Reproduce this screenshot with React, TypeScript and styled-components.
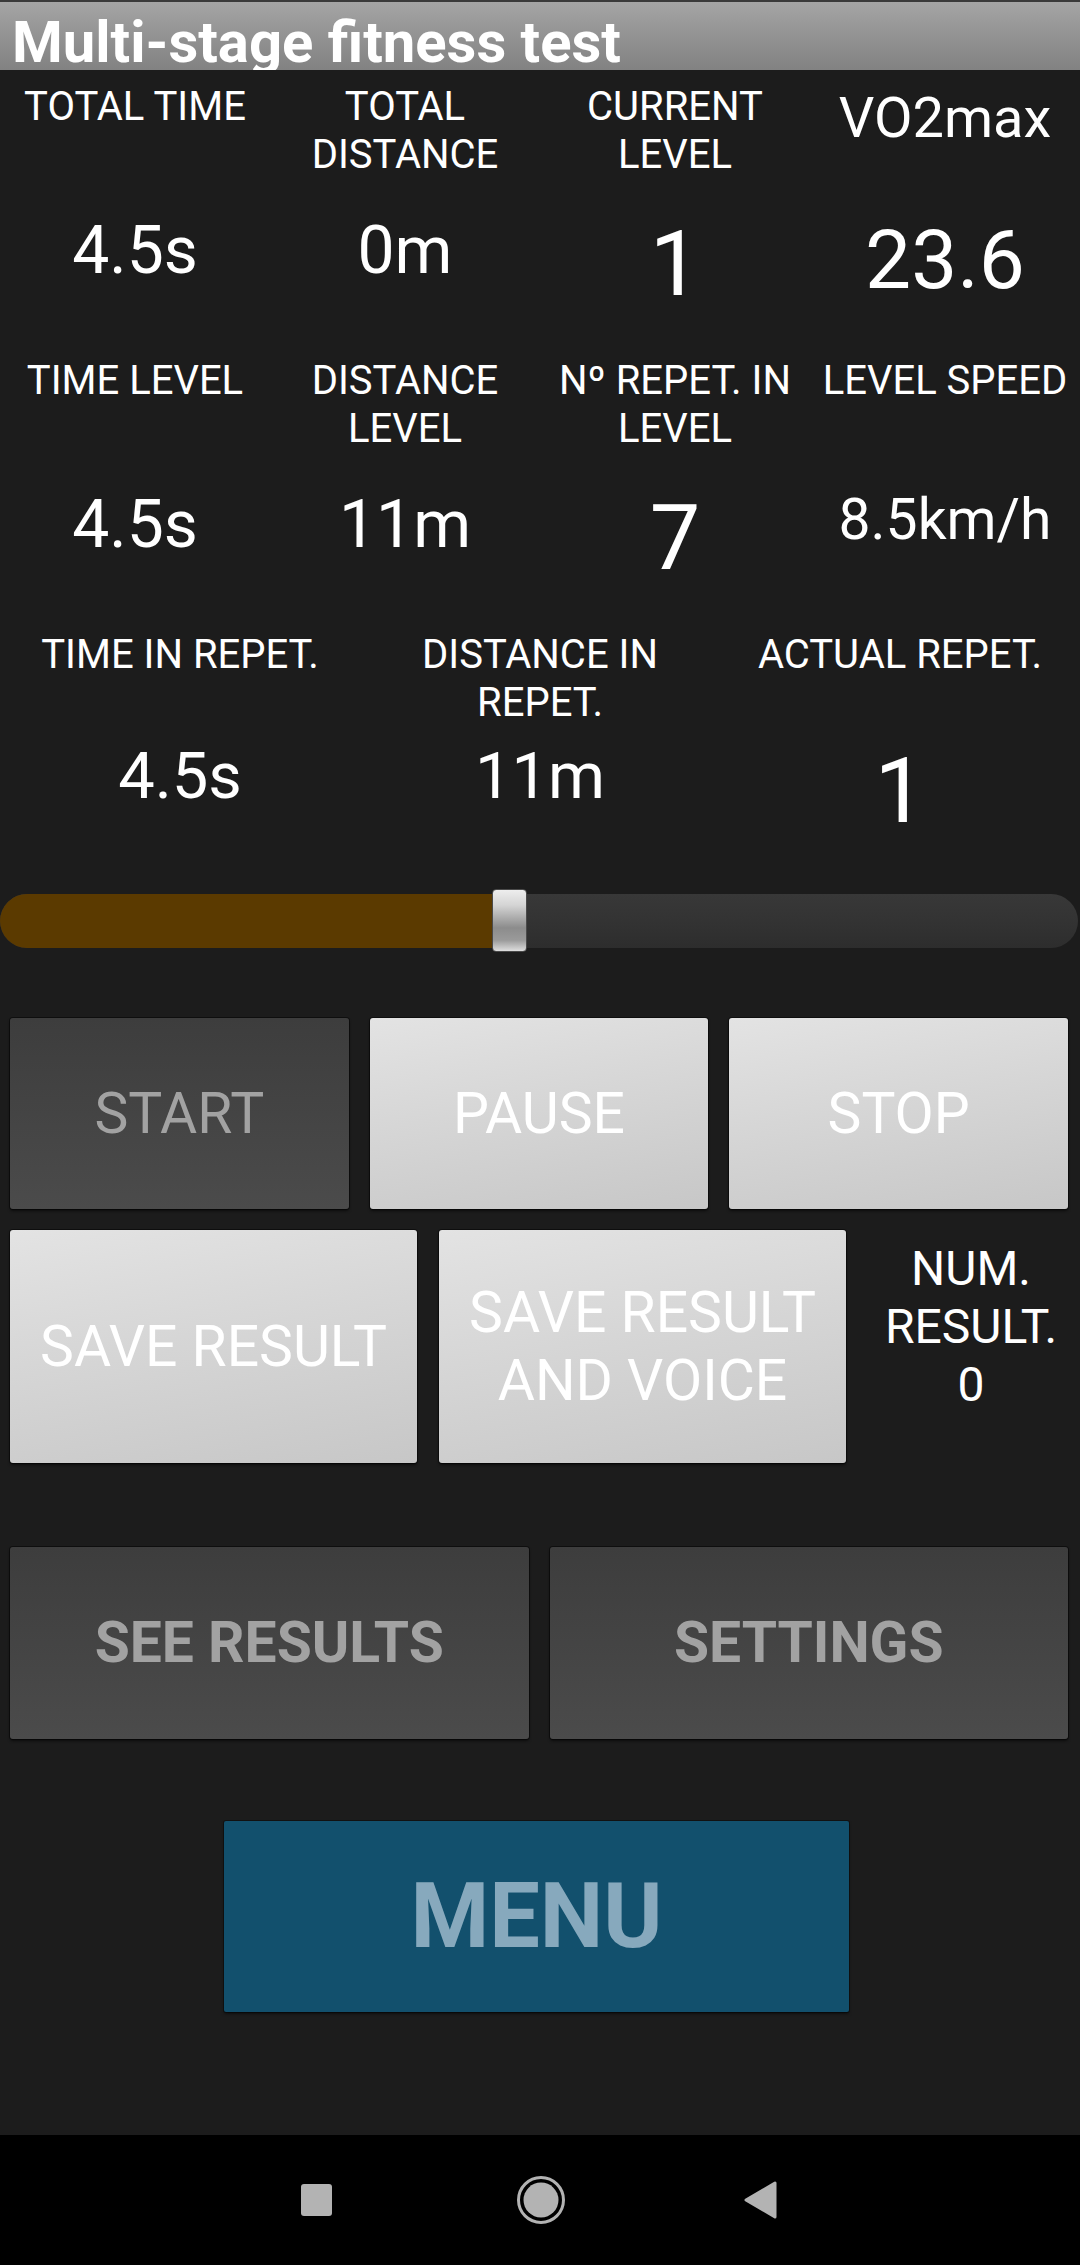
import React from "react";
import styled, { createGlobalStyle } from "styled-components";

const GlobalStyle = createGlobalStyle`
  html, body {
    margin: 0;
    padding: 0;
    background: #1c1c1c;
  }
  * {
    box-sizing: border-box;
  }
`;

const Screen = styled.div`
  width: 1080px;
  min-height: 2265px;
  display: flex;
  flex-direction: column;
  background: #1c1c1c;
  color: #ffffff;
  font-family: Roboto, "Noto Sans", "Liberation Sans", sans-serif;
`;

const TitleBar = styled.header`
  height: 70px;
  overflow: hidden;
  padding: 7px 0 0 12px;
  background: linear-gradient(to bottom, #a6a6a6 0%, #939393 50%, #828282 100%);
  box-shadow: inset 0 2px 0 #3a3a3a;
  font-size: 58px;
  font-weight: 700;
  line-height: 70px;
  white-space: nowrap;
  color: #ffffff;
`;

const StatsRow = styled.section<{ $cols: number; $top?: number }>`
  display: grid;
  grid-template-columns: repeat(${(p) => p.$cols}, 1fr);
  padding-top: ${(p) => p.$top ?? 0}px;
`;

const Cell = styled.div`
  display: flex;
  flex-direction: column;
  align-items: center;
  text-align: center;
`;

const Label = styled.div<{ $h: number; $big?: boolean }>`
  height: ${(p) => p.$h}px;
  font-size: ${(p) => (p.$big ? 56 : 40)}px;
  line-height: ${(p) => (p.$big ? 70 : 48)}px;
  white-space: pre-line;
`;

const Value = styled.div<{ $size: number; $h: number }>`
  height: ${(p) => p.$h}px;
  font-size: ${(p) => p.$size}px;
  line-height: normal;
  white-space: nowrap;
`;

const SliderWrap = styled.div`
  position: relative;
  height: 63px;
  margin-top: 41px;
  display: flex;
  align-items: center;
`;

const Track = styled.div`
  width: 1078px;
  height: 54px;
  border-radius: 27px;
  overflow: hidden;
  display: flex;
  background: linear-gradient(to bottom, #383838 0%, #333333 50%, #2d2d2d 100%);
`;

const Fill = styled.div`
  height: 100%;
  background: #5b3a00;
`;

const Thumb = styled.div`
  position: absolute;
  top: 0;
  width: 35px;
  height: 63px;
  border-radius: 4px;
  border: 1px solid #4a4a4a;
  background: linear-gradient(
    to bottom,
    #eeeeee 0%,
    #d4d4d4 25%,
    #8c8c8c 62%,
    #9a9a9a 82%,
    #dedede 100%
  );
`;

const ButtonRow = styled.div<{ $top: number; $h: number; $gap: number }>`
  display: flex;
  gap: ${(p) => p.$gap}px;
  height: ${(p) => p.$h}px;
  margin-top: ${(p) => p.$top}px;
  padding: 0 12px 0 10px;
`;

const Button = styled.button<{ $tone: "light" | "dark"; $w?: number; $bold?: boolean }>`
  ${(p) => (p.$w ? `width: ${p.$w}px; flex: none;` : "flex: 1;")}
  height: 100%;
  display: flex;
  align-items: center;
  justify-content: center;
  border: none;
  border-radius: 3px;
  padding: 0 10px;
  font-family: Roboto, "Noto Sans", "Liberation Sans", sans-serif;
  font-size: 57px;
  font-weight: ${(p) => (p.$bold ? 700 : 400)};
  line-height: 68px;
  text-align: center;
  color: ${(p) => (p.$tone === "light" ? "#ffffff" : "#a2a2a2")};
  background: ${(p) =>
    p.$tone === "light"
      ? "linear-gradient(170deg, #e3e3e3 0%, #d6d6d6 45%, #c7c7c7 100%)"
      : "linear-gradient(to bottom, #3d3d3d 0%, #444444 50%, #4b4b4b 100%)"};
  box-shadow: 0 0 0 1px rgba(0, 0, 0, 0.45), 0 2px 3px rgba(0, 0, 0, 0.6);
`;

const ResultCount = styled.div`
  flex: 1;
  padding-top: 10px;
  padding-left: 6px;
  font-size: 48px;
  line-height: 58px;
  text-align: center;
  white-space: pre-line;
`;

const MenuButton = styled.button`
  width: 625px;
  height: 191px;
  margin: 82px 0 0 224px;
  border: none;
  border-radius: 2px;
  background: #12506d;
  box-shadow: 0 0 0 1px rgba(0, 0, 0, 0.35), 0 2px 3px rgba(0, 0, 0, 0.5);
  color: #87a9bd;
  font-family: Roboto, "Noto Sans", "Liberation Sans", sans-serif;
  font-size: 90px;
  font-weight: 700;
`;

const NavBar = styled.nav`
  margin-top: auto;
  height: 130px;
  background: #000000;
  display: flex;
  align-items: center;
  justify-content: center;
`;

const NavIcon = styled.svg`
  display: block;
`;

type Stat = { label: string; value: string; size: number; big?: boolean };

const row1: Stat[] = [
  { label: "TOTAL TIME", value: "4.5s", size: 66 },
  { label: "TOTAL\nDISTANCE", value: "0m", size: 66 },
  { label: "CURRENT\nLEVEL", value: "1", size: 90 },
  { label: "VO2max", value: "23.6", size: 82, big: true },
];

const row2: Stat[] = [
  { label: "TIME LEVEL", value: "4.5s", size: 66 },
  { label: "DISTANCE\nLEVEL", value: "11m", size: 66 },
  { label: "Nº REPET. IN\nLEVEL", value: "7", size: 90 },
  { label: "LEVEL SPEED", value: "8.5km/h", size: 57 },
];

const row3: Stat[] = [
  { label: "TIME IN REPET.", value: "4.5s", size: 65 },
  { label: "DISTANCE IN\nREPET.", value: "11m", size: 65 },
  { label: "ACTUAL REPET.", value: "1", size: 91 },
];

function Stats({ items, labelH, valueH, top }: { items: Stat[]; labelH: number; valueH: number; top?: number }) {
  return (
    <StatsRow $cols={items.length} $top={top}>
      {items.map((s) => (
        <Cell key={s.label}>
          <Label $h={labelH} $big={s.big}>
            {s.label}
          </Label>
          <Value $size={s.size} $h={valueH}>
            {s.value}
          </Value>
        </Cell>
      ))}
    </StatsRow>
  );
}

export default function App() {
  const progress = 509; // thumb centre, px along the track
  return (
    <>
      <GlobalStyle />
      <Screen>
        <TitleBar>Multi-stage fitness test</TitleBar>

        <Stats items={row1} labelH={129} valueH={145} top={13} />
        <Stats items={row2} labelH={129} valueH={145} />
        <Stats items={row3} labelH={107} valueH={110} />

        <SliderWrap>
          <Track>
            <Fill style={{ width: progress }} />
          </Track>
          <Thumb style={{ left: progress - 17 }} />
        </SliderWrap>

        <ButtonRow $top={66} $h={191} $gap={21}>
          <Button $tone="dark">START</Button>
          <Button $tone="light">PAUSE</Button>
          <Button $tone="light">STOP</Button>
        </ButtonRow>

        <ButtonRow $top={21} $h={233} $gap={22}>
          <Button $tone="light" $w={407}>
            SAVE RESULT
          </Button>
          <Button $tone="light" $w={407}>
            SAVE RESULT AND VOICE
          </Button>
          <ResultCount>{"NUM.\nRESULT.\n0"}</ResultCount>
        </ButtonRow>

        <ButtonRow $top={84} $h={192} $gap={21}>
          <Button $tone="dark" $bold>
            SEE RESULTS
          </Button>
          <Button $tone="dark" $bold>
            SETTINGS
          </Button>
        </ButtonRow>

        <MenuButton>MENU</MenuButton>

        <NavBar>
          <NavIcon width="560" height="60" viewBox="0 0 560 60">
            {/* recent apps */}
            <rect x="41" y="14" width="31" height="32" rx="3" fill="#b3b3b3" />
            {/* home */}
            <circle cx="281" cy="30" r="22.5" fill="none" stroke="#b3b3b3" strokeWidth="3" />
            <circle cx="281" cy="30" r="17.5" fill="#b3b3b3" />
            {/* back */}
            <path
              d="M515 13 L515 47 L486 30 Z"
              fill="#b3b3b3"
              stroke="#b3b3b3"
              strokeWidth="3"
              strokeLinejoin="round"
            />
          </NavIcon>
        </NavBar>
      </Screen>
    </>
  );
}
